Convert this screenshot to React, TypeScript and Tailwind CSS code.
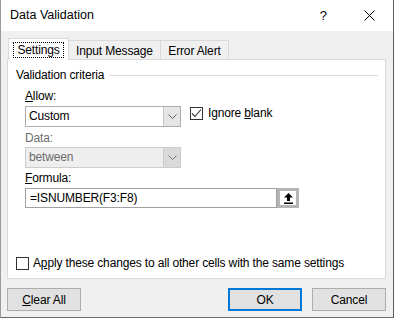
import type { ReactNode } from 'react';

// ─── Small pieces ─────────────────────────────────────────────────────────────

function Chevron({ muted }: { muted?: boolean }) {
  return (
    <svg width="9" height="6" viewBox="0 0 9 6" className="block">
      <path d="M0.5 0.5 L4.5 4.5 L8.5 0.5" fill="none" stroke={muted ? '#7a7a7a' : '#606060'} strokeWidth="1" />
    </svg>
  );
}

function Checkbox({ checked }: { checked?: boolean }) {
  return (
    <span className="flex size-[13px] shrink-0 items-center justify-center border border-[#333333] bg-white">
      {checked && (
        <svg width="11" height="11" viewBox="0 0 11 11">
          <path d="M1 5.5 L4 8.5 L10 1.5" fill="none" stroke="#333333" strokeWidth="1.1" />
        </svg>
      )}
    </span>
  );
}

function Select({ value, disabled }: { value: string; disabled?: boolean }) {
  return (
    <div
      className={
        disabled
          ? 'flex h-[21px] w-[156px] border border-[#cccccc] bg-[#eeeeee]'
          : 'flex h-[21px] w-[156px] border border-[#adadad] bg-white'
      }
    >
      <span className={disabled ? 'flex-1 pl-[3px] leading-[19px] text-[#6d6d6d]' : 'flex-1 pl-[3px] leading-[19px]'}>
        {value}
      </span>
      <span
        className={
          disabled
            ? 'flex w-[17px] items-center justify-center border-l border-[#cccccc] bg-[#dadada]'
            : 'flex w-[17px] items-center justify-center border-l border-[#c6c6c6] bg-[#e5e5e5]'
        }
      >
        <Chevron muted={disabled} />
      </span>
    </div>
  );
}

function Label({ children, muted }: { children: ReactNode; muted?: boolean }) {
  return <p className={muted ? 'h-[16px] leading-[16px] text-[#6d6d6d]' : 'h-[16px] leading-[16px]'}>{children}</p>;
}

function Button({ children, focused }: { children: ReactNode; focused?: boolean }) {
  return (
    <button
      className={
        focused
          ? 'flex h-[23px] w-[74px] items-center justify-center border-2 border-[#0078d7] bg-[#e1e1e1]'
          : 'flex h-[23px] w-[74px] items-center justify-center border border-[#adadad] bg-[#e1e1e1]'
      }
    >
      {children}
    </button>
  );
}

// ─── Dialog ───────────────────────────────────────────────────────────────────

export default function App() {
  return (
    <div className="h-[319px] w-[394px] overflow-hidden bg-white font-['Liberation_Sans',Arial,sans-serif] text-[12px] tracking-[-0.15px] text-black">
      <div className="flex h-[318px] w-[394px] flex-col border-b border-l border-r border-b-[#6a6a6a] border-l-[#9a9a9a] border-r-[#5f5f5f]">
        {/* Title bar */}
        <div className="flex h-[31px] shrink-0 items-center bg-white">
          <span className="ml-[9px] text-[12.5px] tracking-normal">Data Validation</span>
          <span className="ml-auto mr-[37px] text-[13px] tracking-normal">?</span>
          <svg width="11" height="11" viewBox="0 0 11 11" className="mr-[18px]">
            <path d="M0.5 0.5 L10.5 10.5 M10.5 0.5 L0.5 10.5" stroke="#000" strokeWidth="1" />
          </svg>
        </div>

        {/* Body */}
        <div className="flex flex-1 flex-col bg-[#f0f0f0] pb-[6px] pl-[6px] pr-[7px] pt-[7px]">
          {/* Tabs */}
          <div className="relative z-10 flex h-[21px] items-end pl-[1px]">
            <div className="-mb-px flex h-[22px] w-[61px] items-center justify-center border border-b-0 border-[#d9d9d9] bg-white pt-[1px]">
              <span className="border border-dotted border-black px-[3px] leading-[14px]">Settings</span>
            </div>
            <div className="flex h-[19px] w-[92px] items-center justify-center border-r border-t border-[#d9d9d9] pt-[2px]">
              Input Message
            </div>
            <div className="flex h-[19px] w-[68px] items-center justify-center border-r border-t border-[#d9d9d9] pt-[2px]">
              Error Alert
            </div>
          </div>

          {/* Panel */}
          <div className="flex h-[220px] flex-col border border-[#d9d9d9] bg-white pb-[8px] pl-[8px] pr-[7px] pt-[7px]">
            <div className="flex h-[16px] items-center">
              <span className="leading-[16px]">Validation criteria</span>
              <span className="ml-[5px] h-px flex-1 bg-[#dcdcdc]" />
            </div>

            <div className="flex flex-col pl-[9px]">
              <div className="mt-[5px]">
                <Label>
                  <u>A</u>llow:
                </Label>
              </div>
              <div className="mt-[2px] flex items-start">
                <Select value="Custom" />
                <label className="ml-[9px] mt-[1px] flex items-center gap-[5px]">
                  <Checkbox checked />
                  <span className="leading-[13px]">
                    Ignore <u>b</u>lank
                  </span>
                </label>
              </div>

              <div className="mt-[3px]">
                <Label muted>Data:</Label>
              </div>
              <div className="mt-[1px]">
                <Select value="between" disabled />
              </div>

              <div className="mt-[2px]">
                <Label>
                  <u>F</u>ormula:
                </Label>
              </div>
              <div className="mt-[2px] flex h-[20px] w-[274px]">
                <div className="flex-1 border border-[#a0a0a0] pl-[4px] leading-[18px]">=ISNUMBER(F3:F8)</div>
                <button className="flex w-[22px] items-center justify-center border-[3px] border-[#b4b4b4] bg-white">
                  <svg width="9" height="11" viewBox="0 0 9 11">
                    <path d="M4.5 0 L9 4.5 L6 4.5 L6 8 L3 8 L3 4.5 L0 4.5 Z" fill="#000" />
                    <rect x="0" y="9.5" width="9" height="1.5" fill="#000" />
                  </svg>
                </button>
              </div>
            </div>

            <label className="mt-auto flex items-center gap-[4px]">
              <Checkbox />
              <span className="leading-[13px]">
                A<u>p</u>ply these changes to all other cells with the same settings
              </span>
            </label>
          </div>

          {/* Buttons */}
          <div className="mt-[9px] flex h-[23px] items-center">
            <Button>
              <span>
                <u>C</u>lear All
              </span>
            </Button>
            <div className="ml-auto flex gap-[10px]">
              <Button focused>OK</Button>
              <Button>Cancel</Button>
            </div>
          </div>
        </div>
      </div>
    </div>
  );
}
